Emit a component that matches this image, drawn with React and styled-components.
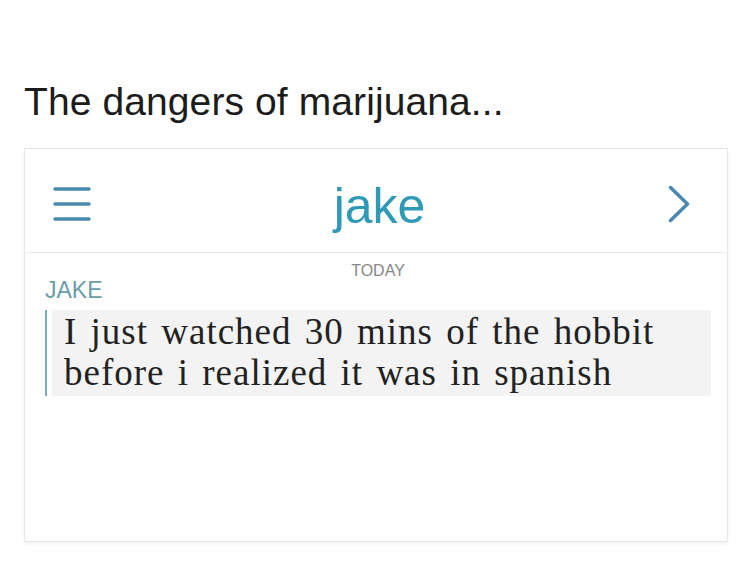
import styled, { createGlobalStyle } from 'styled-components'

const Global = createGlobalStyle`
  body {
    margin: 0;
    background: #fff;
    font-family: "Liberation Sans", Arial, sans-serif;
  }
`;

const Page = styled.div`
  width: 750px;
  height: 574px;
  padding: 82px 22px 0 24px;
  box-sizing: border-box;
`;

const Title = styled.h1`
  margin: 0;
  font-size: 39px;
  line-height: 39px;
  font-weight: 400;
  color: #1c1c1c;
  letter-spacing: 0.1px;
`;

const Card = styled.div`
  margin-top: 27px;
  width: 704px;
  height: 394px;
  box-sizing: border-box;
  border: 1px solid #e6e6e6;
  box-shadow: 0 2px 4px rgba(0, 0, 0, 0.05);
  background: #fff;
`;

const Header = styled.div`
  height: 104px;
  box-sizing: border-box;
  padding: 6px 37px 0 28px;
  border-bottom: 1px solid #e8e8e8;
  display: flex;
  align-items: center;
  justify-content: space-between;
`;

const Name = styled.div`
  font-size: 50px;
  line-height: 50px;
  color: #2e9ab6;
  margin-top: 4px;
`;

const Body = styled.div`
  padding: 10px 16px 0 20px;
`;

const Day = styled.div`
  text-align: center;
  font-size: 16px;
  line-height: 16px;
  color: #878787;
`;

const Sender = styled.div`
  font-size: 23px;
  line-height: 22px;
  color: #6b9caa;
`;

const Message = styled.div`
  margin-top: 9px;
  display: flex;
  gap: 5px;
`;

const Bar = styled.div`
  width: 2px;
  background: #7aa9b9;
`;

const Bubble = styled.div`
  flex: 1;
  background: #f3f3f3;
  padding: 1px 12px 3px 12px;
  font-family: "Liberation Serif", "Times New Roman", serif;
  font-size: 37px;
  line-height: 41px;
  letter-spacing: 1px;
  word-spacing: 3px;
  color: #222;
`;

const Line = styled.div`
  white-space: nowrap;
`;

function Menu() {
  return (
    <svg width="38" height="36" viewBox="0 0 38 36">
      <g stroke="#4a89ae" strokeWidth="3.5" strokeLinecap="round">
        <line x1="2" y1="3" x2="36" y2="3" />
        <line x1="2" y1="18" x2="36" y2="18" />
        <line x1="2" y1="33" x2="36" y2="33" />
      </g>
    </svg>
  )
}

function Chevron() {
  return (
    <svg width="22" height="38" viewBox="0 0 22 38">
      <polyline points="2.5,2.5 19.5,19 2.5,35.5" fill="none" stroke="#4a89ae" strokeWidth="3.5" strokeLinecap="round" strokeLinejoin="round" />
    </svg>
  )
}

function App() {
  return (
    <Page>
      <Global />
      <Title>The dangers of marijuana...</Title>
      <Card>
        <Header>
          <Menu />
          <Name>jake</Name>
          <Chevron />
        </Header>
        <Body>
          <Day>TODAY</Day>
          <Sender>JAKE</Sender>
          <Message>
            <Bar />
            <Bubble>
              <Line>I just watched 30 mins of the hobbit</Line>
              <Line>before i realized it was in spanish</Line>
            </Bubble>
          </Message>
        </Body>
      </Card>
    </Page>
  )
}

export default App
